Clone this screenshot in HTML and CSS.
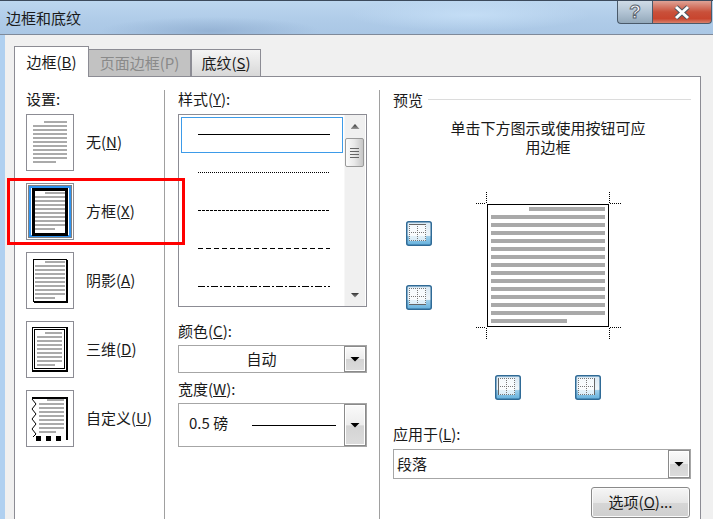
FILE: index.html
```html
<!DOCTYPE html>
<html lang="zh-CN">

<head>
  <meta charset="UTF-8" />
  <title>边框和底纹</title>
  <link rel="stylesheet" href="styles.css">
</head>

<body>
  <div class="window">
    <div class="titlebar">
      <span class="title">边框和底纹</span>
      <div class="caption-btns">
        <div class="help-btn">?</div>
        <div class="close-btn">
          <svg width="20" height="15" viewBox="0 0 20 15">
            <path d="M4 2L16 13M16 2L4 13" stroke="#4a5560" stroke-width="5" />
            <path d="M4 2L16 13M16 2L4 13" stroke="#fff" stroke-width="3" />
          </svg>
        </div>
      </div>
    </div>

    <div class="panel">
      <div class="tabs">
        <div class="tab active">边框(<u>B</u>)</div>
        <div class="tab disabled">页面边框(P)</div>
        <div class="tab last">底纹(<u>S</u>)</div>
      </div>

      <div class="page">
        <div class="col col-settings">
          <div class="label">设置:</div>
          <div class="settings">
            <div class="setting">
              <svg class="setting-icon" width="48" height="57" viewBox="0 0 48 57">
                <rect x=".5" y=".5" width="47" height="56" fill="#fff" stroke="#8c8c94" />
                <path stroke="#aaa" stroke-width="2" d="M18 8H41M7 12H41M7 16H41M7 20H41M7 24H41M7 28H41M7 32H41M7 36H41M7 40H41M7 44H41M7 48H30" />
              </svg>
              <span>无(<u>N</u>)</span>
            </div>
            <div class="setting">
              <svg class="setting-icon" width="48" height="57" viewBox="0 0 48 57">
                <rect x=".5" y=".5" width="47" height="56" fill="#fff" stroke="#8c8c94" />
                <rect x="4" y="4" width="40" height="49" fill="#fff" stroke="#2f93f0" stroke-width="2" />
                <rect x="2.5" y="2.5" width="43" height="52" fill="none" stroke="#000" stroke-dasharray="1 1" />
                <rect x="7.5" y="6.5" width="33" height="45" fill="#fff" stroke="#000" stroke-width="3" />
                <path stroke="#aaa" stroke-width="2" d="M19 10H39M9 14H39M9 18H39M9 22H39M9 26H39M9 30H39M9 34H39M9 38H39M9 42H39M9 46H29" />
              </svg>
              <span>方框(<u>X</u>)</span>
            </div>
            <div class="setting">
              <svg class="setting-icon" width="48" height="57" viewBox="0 0 48 57">
                <rect x=".5" y=".5" width="47" height="56" fill="#fff" stroke="#8c8c94" />
                <rect x="7.5" y="7.5" width="33" height="42" fill="#fff" stroke="#000" />
                <path fill="none" stroke="#000" stroke-width="2" d="M41 8V50H8" />
                <path stroke="#aaa" stroke-width="2" d="M19 10H39M9 14H39M9 18H39M9 22H39M9 26H39M9 30H39M9 34H39M9 38H39M9 42H39M9 46H29" />
              </svg>
              <span>阴影(<u>A</u>)</span>
            </div>
            <div class="setting">
              <svg class="setting-icon" width="48" height="57" viewBox="0 0 48 57">
                <rect x=".5" y=".5" width="47" height="56" fill="#fff" stroke="#8c8c94" />
                <rect x="6.5" y="6.5" width="35" height="44" fill="#fff" stroke="#000" />
                <path fill="none" stroke="#000" stroke-width="2" d="M41 7V50H7" />
                <rect x="8.5" y="8.5" width="30" height="39" fill="#fff" stroke="#000" />
                <path stroke="#aaa" stroke-width="2" d="M19 12H36M11 16H36M11 20H36M11 24H36M11 28H36M11 32H36M11 36H36M11 40H36M11 44H29" />
              </svg>
              <span>三维(<u>D</u>)</span>
            </div>
            <div class="setting">
              <svg class="setting-icon" width="48" height="57" viewBox="0 0 48 57">
                <rect x=".5" y=".5" width="47" height="56" fill="#fff" stroke="#8c8c94" />
                <path fill="none" stroke="#000" stroke-width="2" d="M6 8H42M41 8V50" />
                <path fill="none" stroke="#000" d="M6 9L10 14L6 19L10 24L6 29L10 34L6 39L10 44L7 47" />
                <path d="M10 46h5v5h-5zM20 46h5v5h-5zM30 46h5v5h-5z" />
                <path stroke="#aaa" stroke-width="2" d="M21 10H38M13 14H38M13 18H38M13 22H38M13 26H38M13 30H38M13 34H38M13 38H38M13 42H30" />
              </svg>
              <span>自定义(<u>U</u>)</span>
            </div>
          </div>
        </div>

        <div class="col col-style">
          <div class="label">样式(<u>Y</u>):</div>
          <div class="style-list">
            <div class="style-rows">
              <div class="style-row selected"><div class="line solid"></div></div>
              <div class="style-row"><div class="line dotted"></div></div>
              <div class="style-row"><div class="line fine-dash"></div></div>
              <div class="style-row"><div class="line dash"></div></div>
              <div class="style-row"><div class="line dash-dot"></div></div>
            </div>
            <div class="scrollbar">
              <div class="scroll-up"><i class="arrow-up"></i></div>
              <div class="scroll-thumb"><i></i><i></i><i></i><i></i></div>
              <div class="scroll-track"></div>
              <div class="scroll-down"><i class="arrow-down"></i></div>
            </div>
          </div>

          <div class="label label-color">颜色(<u>C</u>):</div>
          <div class="combo combo-color">
            <div class="combo-value center">自动</div>
            <div class="combo-btn"><i class="caret"></i></div>
          </div>

          <div class="label label-width">宽度(<u>W</u>):</div>
          <div class="combo combo-width">
            <div class="combo-value">
              <span class="width-text">0.5 磅</span>
              <span class="width-line"></span>
            </div>
            <div class="combo-btn"><i class="caret"></i></div>
          </div>
        </div>

        <div class="col col-preview">
          <div class="preview-head">
            <span>预览</span>
            <div class="preview-rule"></div>
          </div>
          <div class="hint">单击下方图示或使用按钮可应用边框</div>

          <svg class="diagram" width="298" height="230" viewBox="0 0 298 230">
            <defs>
              <linearGradient id="btnFill" x1="0" y1="0" x2="0" y2="1">
                <stop offset="0" stop-color="#d8e8f3" />
                <stop offset=".58" stop-color="#f0f6fa" />
                <stop offset=".62" stop-color="#9fd0ec" />
                <stop offset="1" stop-color="#62afdc" />
              </linearGradient>
              <symbol id="grid-btn" width="26" height="25" viewBox="0 0 26 25">
                <rect x=".75" y=".75" width="24.5" height="23.5" rx="2" fill="url(#btnFill)" stroke="#2f6a96" stroke-width="1.5" />
                <rect x="3" y="3" width="17" height="17" fill="#fff" fill-opacity=".7" />
                <path fill="none" stroke="#777" stroke-dasharray="1 1" d="M3 3.5H20M3 11.5H20M3 19.5H20M3.5 3V20M11.5 3V20M19.5 3V20" />
              </symbol>
            </defs>

            <rect x="94.5" y="24.5" width="121" height="122" fill="#fff" stroke="#000" />
            <path stroke="#a9a9a9" stroke-width="4" d="M136 29H212M98 37H212M98 45H212M98 53H212M98 61H212M98 69H212M98 77H212M98 85H212M98 93H212M98 101H212M98 109H212M98 117H212M98 125H212M98 133H212M98 141H174" />
            <path fill="none" stroke="#000" stroke-dasharray="1 1" d="M83 23.5H93M93.5 12V23M216.5 12V23M217 23.5H228M83 147.5H93M93.5 148V159M216.5 148V159M217 147.5H228" />

            <use href="#grid-btn" x="13" y="41" />
            <path stroke="#666" d="M16 44.5H33" />
            <use href="#grid-btn" x="13" y="105" />
            <path stroke="#666" d="M16 124.5H33" />
            <use href="#grid-btn" x="102" y="195" />
            <path stroke="#666" d="M105.5 198V215" />
            <use href="#grid-btn" x="182" y="195" />
            <path stroke="#666" d="M201.5 198V215" />
          </svg>

          <div class="label label-apply">应用于(<u>L</u>):</div>
          <div class="combo combo-apply">
            <div class="combo-value">段落</div>
            <div class="combo-btn"><i class="caret"></i></div>
          </div>
          <div class="actions">
            <div class="push-btn">选项(<u>O</u>)...</div>
          </div>
        </div>
      </div>
    </div>
  </div>

  <div class="highlight"></div>
</body>

</html>
```

FILE: styles.css
```css
html,
body {
  margin: 0;
  height: 100%;
  overflow: hidden;
}

body {
  font-family: "Noto Sans CJK SC", "Liberation Sans", sans-serif;
  font-size: 15px;
  color: #1a1a1a;
}

svg {
  display: block;
}

.window {
  display: flex;
  flex-direction: column;
  width: 713px;
  height: 519px;
  background: #b0d0f0;
}

/* title bar */
.titlebar {
  display: flex;
  justify-content: space-between;
  box-sizing: border-box;
  height: 35px;
  padding-left: 6px;
  padding-right: 1px;
  border-top: 1px solid #3c4a5c;
  border-bottom: 1px solid #7f8a9a;
  background:
    radial-gradient(ellipse 110px 14px at 210px 30px, rgba(140, 170, 205, .7), transparent),
    radial-gradient(ellipse 120px 16px at 470px 14px, rgba(200, 225, 248, .8), transparent),
    linear-gradient(#bcd6ef, #afcbe8 60%, #aac7e5);
}

.title {
  line-height: 34px;
}

.caption-btns {
  display: flex;
  height: 23px;
}

.help-btn {
  width: 35px;
  box-sizing: border-box;
  border: 1px solid #4a5a6a;
  border-top: none;
  border-right: none;
  border-radius: 0 0 0 4px;
  background: linear-gradient(#cfdbe6, #b2c4d4 50%, #93a8ba);
  color: #fff;
  font-family: "Liberation Sans", sans-serif;
  font-size: 19px;
  font-weight: bold;
  line-height: 22px;
  text-align: center;
  -webkit-text-stroke: 1px #5a6570;
}

.close-btn {
  display: flex;
  align-items: center;
  justify-content: center;
  width: 60px;
  box-sizing: border-box;
  border: 1px solid #4a5a6a;
  border-top: none;
  border-radius: 0 0 4px 0;
  background: linear-gradient(#dfa396, #c9503a 50%, #c8452e 80%, #d8806c);
}

/* dialog body */
.panel {
  flex: 1;
  display: flex;
  flex-direction: column;
  min-height: 0;
  margin-left: 5px;
  padding: 11px 12px 0 9px;
  border-left: 0;
  background: #f0f0f0;
}

.tabs {
  display: flex;
  align-items: flex-end;
  height: 31px;
  margin-bottom: -1px;
}

.tab {
  box-sizing: border-box;
  height: 28px;
  border: 1px solid #8c8c94;
  border-bottom: none;
  line-height: 25px;
  text-align: center;
}

.tab.active {
  position: relative;
  z-index: 1;
  width: 75px;
  height: 31px;
  background: #fff;
  line-height: 29px;
}

.tab.disabled {
  width: 102px;
  border-left: none;
  background: #c2c2c2;
  color: #8a8a8a;
}

.tab.last {
  width: 70px;
  background: linear-gradient(#f4f4f4, #e6e6e6 50%, #d6d6d6);
}

.page {
  flex: 1;
  display: flex;
  box-sizing: border-box;
  width: 687px;
  min-height: 0;
  padding-top: 13px;
  border: 1px solid #8c8c94;
  border-bottom: none;
  background: #fff;
}

.col {
  box-sizing: border-box;
}

.label {
  height: 24px;
  line-height: 18px;
}

/* settings column */
.col-settings {
  width: 150px;
  padding-left: 11px;
  border-right: 1px solid #a0a0a0;
}

.settings {
  display: flex;
  flex-direction: column;
  gap: 12px;
}

.setting {
  display: flex;
  align-items: center;
  gap: 12px;
  height: 57px;
}

.setting span {
  margin-bottom: 2px;
}

/* style column */
.col-style {
  width: 215px;
  padding-left: 13px;
  border-right: 1px solid #a0a0a0;
}

.style-list {
  display: flex;
  box-sizing: border-box;
  width: 189px;
  height: 193px;
  border: 1px solid #8c8c94;
}

.style-rows {
  flex: 1;
  padding: 2px 0 0 2px;
}

.style-row {
  display: flex;
  align-items: center;
  box-sizing: border-box;
  width: 162px;
  height: 36px;
  margin-bottom: 2px;
  padding: 0 0 2px 16px;
  border: 1px solid transparent;
}

.style-row.selected {
  border-color: #3d9be9;
}

.line {
  width: 132px;
  height: 1px;
}

.line.solid {
  background: #000;
}

.line.dotted {
  background: repeating-linear-gradient(90deg, #000 0 1px, transparent 1px 2px);
}

.line.fine-dash {
  background: repeating-linear-gradient(90deg, #000 0 3px, transparent 3px 4px);
}

.line.dash {
  background: repeating-linear-gradient(90deg, #000 0 5px, transparent 5px 8px);
}

.line.dash-dot {
  background: repeating-linear-gradient(90deg, #000 0 7px, transparent 7px 9px, #000 9px 11px, transparent 11px 13px);
}

.scrollbar {
  display: flex;
  flex-direction: column;
  width: 20px;
  margin-right: 1px;
  background: #f0f0f0;
  border-left: 1px solid #f7f7f7;
}

.scroll-up {
  display: flex;
  align-items: center;
  justify-content: center;
  height: 23px;
}

.scroll-down {
  display: flex;
  align-items: center;
  justify-content: center;
  height: 22px;
}

.scroll-track {
  flex: 1;
}

.arrow-up,
.arrow-down {
  width: 9px;
  height: 5px;
  background: linear-gradient(#333, #999);
}

.arrow-up {
  clip-path: polygon(50% 0, 100% 100%, 0 100%);
}

.arrow-down {
  clip-path: polygon(0 0, 100% 0, 50% 100%);
}

.scroll-thumb {
  display: flex;
  flex-direction: column;
  align-items: center;
  justify-content: center;
  gap: 2px;
  box-sizing: border-box;
  width: 19px;
  height: 29px;
  border: 1px solid #999;
  border-radius: 2px;
  background: linear-gradient(90deg, #fbfbfb, #e8e8e8 50%, #c6c6c6);
}

.scroll-thumb i {
  width: 9px;
  height: 1px;
  background: #666;
}

/* combos */
.combo {
  display: flex;
  box-sizing: border-box;
  border: 1px solid #a6a6a6;
}

.combo-value {
  flex: 1;
  display: flex;
  align-items: center;
  padding-left: 3px;
  padding-bottom: 2px;
}

.combo-value.center {
  justify-content: center;
  padding-left: 0;
}

.combo-btn {
  display: flex;
  align-items: center;
  justify-content: center;
  box-sizing: border-box;
  width: 22px;
  border: 1px solid #8a8a8a;
  background: linear-gradient(#fafafa, #ededed 50%, #d4d4d4 52%, #dcdcdc);
  box-shadow: inset 0 0 0 1px #fff;
}

.caret {
  width: 10px;
  height: 5px;
  background: #000;
  clip-path: polygon(0 0, 100% 0, 50% 100%);
}

.label-color {
  height: 23px;
  margin-top: 15px;
}

.combo-color {
  width: 189px;
  height: 28px;
}

.label-width {
  height: 23px;
  margin-top: 7px;
}

.combo-width {
  width: 189px;
  height: 44px;
}

.width-text {
  margin-left: 7px;
  margin-bottom: 3px;
}

.width-line {
  width: 84px;
  height: 1px;
  margin-left: 24px;
  margin-top: 2px;
  background: #000;
}

/* preview column */
.col-preview {
  flex: 1;
  padding: 0 9px 0 13px;
}

.preview-head {
  display: flex;
  align-items: center;
  gap: 5px;
  height: 18px;
}

.preview-rule {
  flex: 1;
  height: 1px;
  background: #dcdcdc;
}

.hint {
  width: 202px;
  margin: 10px 0 0 54px;
  line-height: 19px;
  text-align: center;
}

.diagram {
  margin-top: 24px;
}

.label-apply {
  margin-top: 15px;
}

.combo-apply {
  width: 298px;
  height: 30px;
}

.actions {
  display: flex;
  justify-content: flex-end;
  margin-top: 8px;
}

.push-btn {
  box-sizing: border-box;
  width: 99px;
  height: 31px;
  margin-right: 1px;
  border: 1px solid #8a8a8a;
  border-radius: 3px;
  background: linear-gradient(#f6f6f6, #e6e6e6 50%, #d6d6d6 52%, #cfcfcf);
  box-shadow: inset 0 0 0 1px #fbfbfb;
  line-height: 27px;
  text-align: center;
}

/* red annotation over the dialog */
.highlight {
  position: absolute;
  left: 7px;
  top: 178px;
  width: 172px;
  height: 61px;
  border: 3px solid #f00;
}
```
